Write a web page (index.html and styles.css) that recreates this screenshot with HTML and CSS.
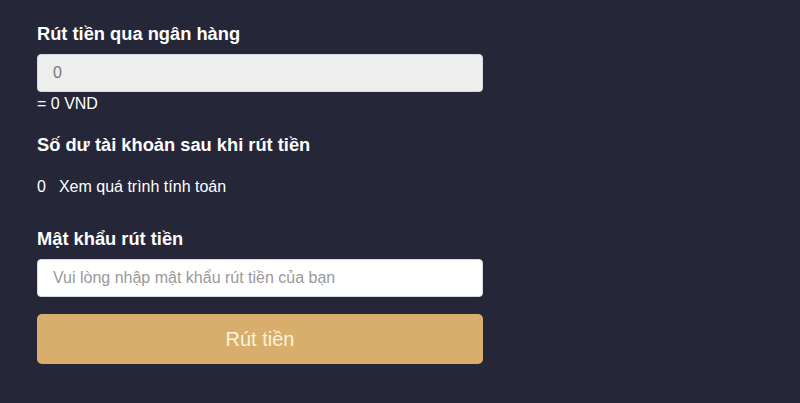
FILE: index.html
```html
<!DOCTYPE html>
<html lang="vi">
<head>
    <meta charset="UTF-8">
    <meta name="viewport" content="width=device-width, initial-scale=1.0">
    <title>Rút tiền</title>
    <link rel="stylesheet" href="styles.css">
</head>
<body>
    <div class="withdraw-form">
        <h2 class="section-title">Rút tiền qua ngân hàng</h2>
        <input class="field field-amount" type="text" value="0" readonly>
        <p class="rate">= 0 VND</p>

        <h2 class="section-title balance-title">Số dư tài khoản sau khi rút tiền</h2>
        <div class="balance">
            <span>0</span>
            <span>Xem quá trình tính toán</span>
        </div>

        <h2 class="section-title password-title">Mật khẩu rút tiền</h2>
        <input class="field" type="password" placeholder="Vui lòng nhập mật khẩu rút tiền của bạn">

        <button class="submit-btn" type="button">Rút tiền</button>
    </div>
</body>
</html>
```

FILE: styles.css
```css
:root {
    --bg: #262639;
    --gold: #d9ae6c;
    --text: #ffffff;
}

* {
    margin: 0;
    padding: 0;
    box-sizing: border-box;
    font-family: 'Liberation Sans', Arial, sans-serif;
}

body {
    background: var(--bg);
    min-height: 100vh;
    color: var(--text);
}

.withdraw-form {
    width: 446px;
    margin-left: 37px;
    padding-top: 23px;
}

.section-title {
    font-size: 18.3px;
    line-height: 21px;
    font-weight: bold;
    margin-bottom: 10px;
}

.field {
    display: block;
    width: 100%;
    height: 38px;
    padding: 0 15px;
    font-size: 16px;
    color: #555;
    background: #fff;
    border: 1px solid #d8d8e0;
    border-radius: 4px;
    outline: none;
}

.field::placeholder {
    color: #999;
}

.field-amount {
    background: #eeeeee;
    color: #777;
}

.rate {
    font-size: 16px;
    line-height: 18px;
    margin-top: 3px;
}

.balance-title {
    margin-top: 21px;
}

.balance {
    display: flex;
    gap: 13px;
    font-size: 16px;
    line-height: 18px;
    margin-top: 23px;
}

.password-title {
    margin-top: 32px;
}

.submit-btn {
    display: block;
    width: 100%;
    height: 50px;
    margin-top: 17px;
    background: var(--gold);
    color: #fcf2dc;
    font-size: 20px;
    border: none;
    border-radius: 5px;
    cursor: pointer;
}
```
